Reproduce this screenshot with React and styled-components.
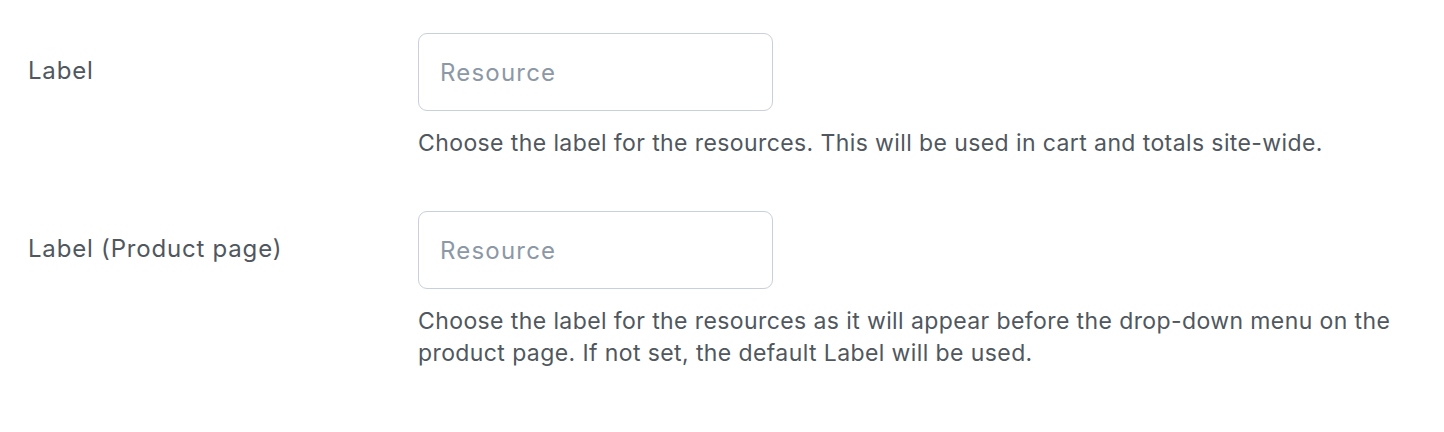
import React from "react";
import styled, { createGlobalStyle } from "styled-components";

const Global = createGlobalStyle`
  html, body { margin: 0; padding: 0; background: #ffffff; }
  body { font-family: Inter, "Noto Sans", sans-serif; -webkit-font-smoothing: antialiased; }
`;

const Table = styled.div`
  display: flex;
  flex-direction: column;
  padding: 33px 28px 0 28px;
  gap: 52px;
`;

const Row = styled.div`
  display: grid;
  grid-template-columns: 390px 1fr;
  align-items: start;
`;

const Label = styled.label`
  font-size: 24px;
  letter-spacing: 0.8px;
  line-height: 32px;
  color: #50575e;
  padding-top: 22px;
`;

const Field = styled.div`
  display: flex;
  flex-direction: column;
`;

const Input = styled.input`
  box-sizing: border-box;
  width: 355px;
  height: 78px;
  border: 1.5px solid #c8d0db;
  border-radius: 9px;
  padding: 0 21px;
  font-family: Inter, "Noto Sans", sans-serif;
  font-size: 24px;
  letter-spacing: 1.2px;
  color: #2c3338;
  background: #fff;
  outline: none;
  &::placeholder { color: #8c98a6; }
`;

const Desc = styled.p`
  margin: 16px 0 0;
  font-size: 23px;
  letter-spacing: 0.4px;
  line-height: 32px;
  color: #50575e;
  max-width: 1000px;
`;

const rows = [
  {
    id: "label",
    label: "Label",
    desc: "Choose the label for the resources. This will be used in cart and totals site-wide.",
  },
  {
    id: "label-product",
    label: "Label (Product page)",
    desc: "Choose the label for the resources as it will appear before the drop-down menu on the product page. If not set, the default Label will be used.",
  },
];

export default function App() {
  return (
    <>
      <Global />
      <Table>
        {rows.map((r) => (
          <Row key={r.id}>
            <Label htmlFor={r.id}>{r.label}</Label>
            <Field>
              <Input id={r.id} type="text" placeholder="Resource" />
              <Desc>{r.desc}</Desc>
            </Field>
          </Row>
        ))}
      </Table>
    </>
  );
}
